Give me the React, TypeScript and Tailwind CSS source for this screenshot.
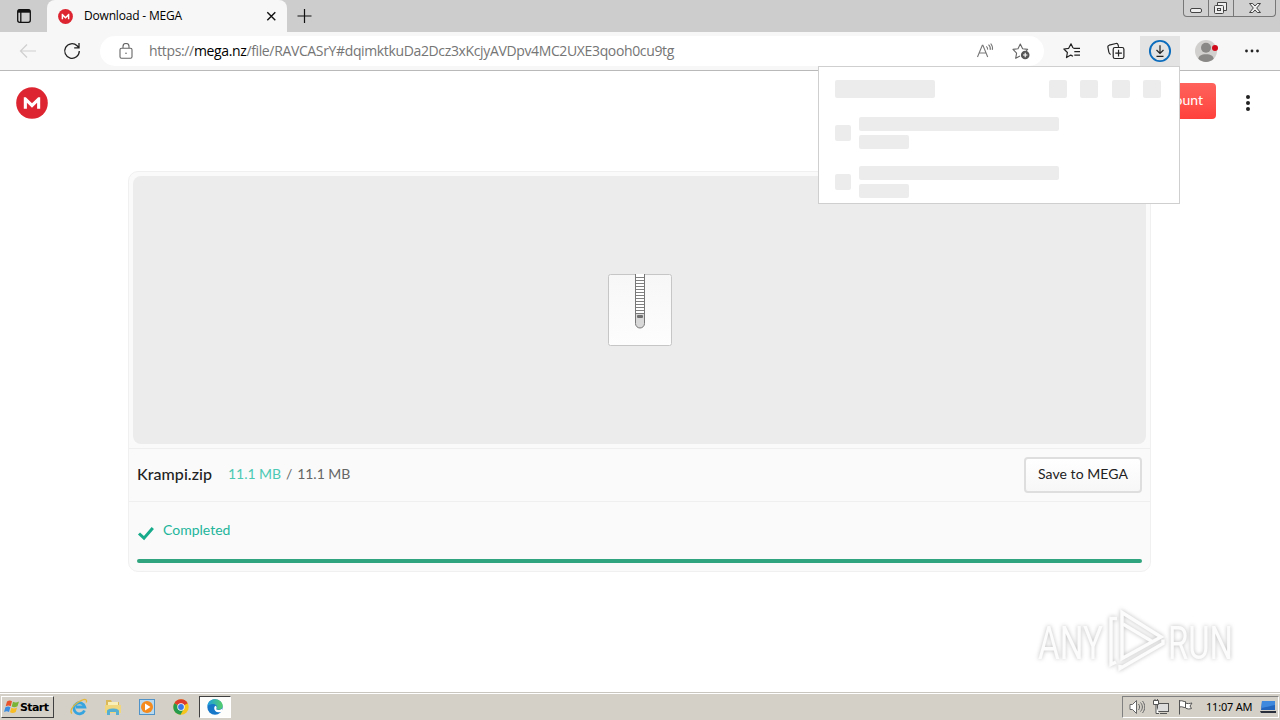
import type { ReactNode } from 'react';

const SEGOE = "font-['Open_Sans','Noto_Sans',sans-serif]";
const LATO = "font-['Lato',sans-serif]";

function MegaLogo({ size }: { size: number }) {
  return (
    <svg width={size} height={size} viewBox="0 0 32 32">
      <circle cx="16" cy="16" r="15.8" fill="#dc2530" />
      <path d="M7.8 21.8V10.2h2l6.2 6.1 6.2-6.1h2v11.6h-3.1v-6L16 20.7l-5.1-4.9v6z" fill="#fff" />
    </svg>
  );
}

function TabStrip() {
  return (
    <div className="flex h-8 bg-[#cdcdcd]">
      <div className="flex w-[47px] justify-center pt-2">
        <svg width="16" height="16" viewBox="0 0 16 16" fill="none" stroke="#111" strokeWidth="1.3">
          <rect x="1.7" y="1.7" width="12.6" height="12.6" rx="2" />
          <path d="M2 3.2h12" strokeWidth="3" />
          <path d="M4.8 4v10" />
        </svg>
      </div>
      <div className="flex h-8 w-60 items-center rounded-t-lg bg-[#f7f7f7] pl-[11px]">
        <MegaLogo size={15} />
        <span className={`${SEGOE} ml-[11px] w-[177px] text-[12px] leading-4 tracking-[-0.18px] text-black`}>
          Download - MEGA
        </span>
        <svg width="20" height="20" viewBox="0 0 20 20" stroke="#111" strokeWidth="1.4">
          <path d="M6.3 6.3l8 8M14.3 6.3l-8 8" />
        </svg>
      </div>
      <div className="flex w-[36px] items-center justify-center">
        <svg width="16" height="16" viewBox="0 0 16 16" stroke="#111" strokeWidth="1.2">
          <path d="M7.5 1v14M.5 8h14" />
        </svg>
      </div>
      <div className="ml-auto mr-[4px] flex h-[17px] w-[93px] rounded-b-[4px] border border-t-0 border-[#777] bg-[#d0d0d0]">
        <svg width="91" height="16" viewBox="0 0 91 16" fill="none" stroke="#444" strokeWidth="1">
          <path d="M24.5 0v16M49.5 0v16" stroke="#777" />
          <rect x="6.5" y="8.5" width="11" height="4" rx="1.5" fill="#eee" />
          <path d="M33.5 5.500V2.500h9v8h-3" fill="#eee" />
          <rect x="30.500" y="5.500" width="9" height="8" rx="1" fill="#eee" />
          <rect x="33.500" y="8.500" width="3" height="2" />
          <path d="M65.500 3.500h3.200l2.300 2.500 2.300-2.500h3.200l-3.800 4.500 3.800 4.500h-3.200l-2.300-2.500-2.300 2.500h-3.200l3.800-4.500z" fill="#eee" />
        </svg>
      </div>
    </div>
  );
}

function Slot({ className, children }: { className: string; children: ReactNode }) {
  return <div className={`flex h-[30px] shrink-0 items-center justify-center ${className}`}>{children}</div>;
}

function Toolbar() {
  return (
    <div className="flex h-[39px] border-b border-[#b9b9b9] bg-[#f7f7f7] pt-1">
      <Slot className="w-14">
        <svg width="18" height="16" viewBox="0 0 18 16" fill="none" stroke="#cfcfcf" strokeWidth="1.2">
          <path d="M17 8H1.500M8 1.500L1.500 8 8 14.500" />
        </svg>
      </Slot>
      <Slot className="w-8">
        <svg width="18" height="18" viewBox="0 0 18 18" fill="none" stroke="#222" strokeWidth="1.300">
          <path d="M16.300 9a7.300 7.300 0 1 1-2.200-5.200L16 5.700M16 1v4.800h-4.800" />
        </svg>
      </Slot>
      <div className="ml-3 flex h-[30px] w-[944px] shrink-0 items-center rounded-full bg-white pl-[19px]">
        <svg width="14" height="16" viewBox="0 0 14 16" fill="none" stroke="#666" strokeWidth="1.100">
          <rect x="1" y="5.200" width="12" height="10" rx="1.500" />
          <path d="M4 5V3.500a3 3 0 0 1 6 0V5" />
          <circle cx="7" cy="10.200" r=".8" fill="#666" stroke="none" />
        </svg>
        <span className={`${SEGOE} ml-4 w-[822px] whitespace-nowrap text-[14px] leading-5 tracking-[-0.36px] text-[#757575]`}>
          https://<span className="text-black">mega.nz</span>
          /file/RAVCASrY#dqimktkuDa2Dcz3xKcjyAVDpv4MC2UXE3qooh0cu9tg
        </span>
        <Slot className="w-[28px]">
          <svg width="18" height="16" viewBox="0 0 18 16" fill="none" stroke="#777" strokeWidth="1.100">
            <path d="M1.500 14L6.300 2.200h.6L11.700 14M3.200 10h6.800M10.300 3.300c1.100 1 1.500 2 1.300 3.400M12.500 1.700c1.700 1.600 2.200 3.300 1.700 5.200M14.700.5c1.700 2.200 2.300 4 1.600 6.300" />
          </svg>
        </Slot>
        <Slot className="ml-[8px] w-[28px]">
          <svg width="18" height="18" viewBox="0 0 18 18" fill="none" stroke="#666" strokeWidth="1.100">
            <path d="M8 14l-4.300 2.300.9-5.200L1 7.400l5-.7L8.300 2l2.300 4.700 5 .7-1.400 1.500" strokeLinejoin="round" />
            <circle cx="13.200" cy="13" r="4.300" fill="#555" stroke="none" />
            <path d="M13.200 10.800v4.400M11 13h4.400" stroke="#fff" />
          </svg>
        </Slot>
      </div>
      <Slot className="ml-[8px] w-10">
        <svg width="18" height="18" viewBox="0 0 18 18" fill="none" stroke="#222" strokeWidth="1.200">
          <path d="M10 14.300l-2.200-1.200-4.300 2.500.9-5.100L.9 7l4.800-.7L8 1.800l2 4.300M10.300 6.300H17M11.300 9.700H17M11.300 13.200H17" strokeLinejoin="round" />
        </svg>
      </Slot>
      <Slot className="ml-1 w-10">
        <svg width="18" height="18" viewBox="0 0 18 18" fill="none" stroke="#222" strokeWidth="1.200">
          <path d="M3.700 12.500C2.300 11.800 2 11 1.800 10L.9 5.200c-.2-1 .3-1.700 1.300-2L9 1.500c1-.2 1.800.3 2.100 1.300l.5 2" />
          <rect x="6.200" y="5.500" width="10.700" height="11" rx="1.800" />
          <path d="M11.550 7.800v6.600M8.300 11.100h6.600" />
        </svg>
      </Slot>
      <Slot className="ml-1 w-10 bg-[#e3e3e3]">
        <svg width="24" height="24" viewBox="0 0 24 24" fill="none">
          <circle cx="12" cy="12" r="10.100" stroke="#0b6cbd" strokeWidth="1.900" />
          <path d="M12 6.200v8M8.500 11l3.500 3.500 3.500-3.500M8.500 17.300h7" stroke="#222" strokeWidth="1.200" />
        </svg>
      </Slot>
      <Slot className="ml-[14px] w-6">
        <svg width="24" height="24" viewBox="0 0 24 24">
          <circle cx="12" cy="12" r="11" fill="#d2d0ce" />
          <circle cx="12" cy="8.800" r="5" fill="#8a8886" />
          <path d="M4.300 19.800c.6-3 2.700-4.500 7.700-4.500s7.100 1.500 7.700 4.500A11 11 0 0 1 4.300 19.800z" fill="#8a8886" />
          <circle cx="21" cy="9" r="3" fill="#d10a1b" />
        </svg>
      </Slot>
      <Slot className="ml-[24px] w-5">
        <svg width="16" height="4" viewBox="0 0 16 4" fill="#222">
          <circle cx="2.500" cy="2" r="1.400" />
          <circle cx="8" cy="2" r="1.400" />
          <circle cx="13.500" cy="2" r="1.400" />
        </svg>
      </Slot>
    </div>
  );
}

function SkeletonRow() {
  return (
    <div className="flex items-center gap-2">
      <div className="size-4 rounded-[2px] bg-[#ececec]" />
      <div className="flex flex-col gap-1">
        <div className="h-[14px] w-[200px] rounded-[2px] bg-[#ececec]" />
        <div className="h-[14px] w-[50px] rounded-[2px] bg-[#ececec]" />
      </div>
    </div>
  );
}

function DownloadsFlyout() {
  return (
    <div className="absolute left-[818px] top-[66px] h-[138px] w-[362px] border border-[#cfcfcf] bg-white pl-4 pt-[13px]">
      <div className="flex h-[18px]">
        <div className="w-[100px] rounded-[2px] bg-[#ececec]" />
        <div className="ml-[114px] w-[18px] rounded-[2px] bg-[#ececec]" />
        <div className="ml-[13px] w-[18px] rounded-[2px] bg-[#ececec]" />
        <div className="ml-[14px] w-[18px] rounded-[2px] bg-[#ececec]" />
        <div className="ml-[13px] w-[18px] rounded-[2px] bg-[#ececec]" />
      </div>
      <div className="mt-[19px] flex flex-col gap-[17px]">
        <SkeletonRow />
        <SkeletonRow />
      </div>
    </div>
  );
}

function ZipIcon() {
  return (
    <svg width="66" height="76" viewBox="0 0 66 76">
      <defs>
        <linearGradient id="paper" x1="0" y1="0" x2="0" y2="1">
          <stop offset="0" stopColor="#f7f7f7" />
          <stop offset="1" stopColor="#fdfdfd" />
        </linearGradient>
      </defs>
      <rect x="1.500" y="2.500" width="63" height="71" rx="2" fill="url(#paper)" stroke="#c6c6c6" />
      <rect x="28" y="2" width="10" height="41" fill="#fff" />
      <path d="M28 5.500h10M28 8.500h10M28 11.500h10M28 14.500h10M28 17.500h10M28 20.500h10M28 23.500h10M28 26.500h10M28 29.500h10M28 32.500h10M28 35.500h10M28 38.500h10" stroke="#808080" />
      <path d="M28.500 41.500h9v10a4.500 4.500 0 0 1-9 0z" fill="#d8d8d8" />
      <path d="M28.500 2v49.500a4.500 4.500 0 0 0 9 0V2M28 41.500h10" fill="none" stroke="#777" />
      <rect x="30" y="43" width="6" height="3" rx="1" fill="#707070" />
    </svg>
  );
}

function FileCard() {
  return (
    <div className={`${LATO} ml-32 mt-[60px] h-[401px] w-[1023px] rounded-[10px] border border-[#f0f0f0] bg-[#fafafa]`}>
      <div className="ml-1 mt-1 flex h-[268px] w-[1013px] items-start justify-center rounded-lg bg-[#ececec] pt-24">
        <ZipIcon />
      </div>
      <div className="mt-1 flex h-[54px] items-center border-y border-[#efefef] pl-2 pr-2">
        <span className="w-[91px] whitespace-nowrap pb-[2px] text-[16px] font-medium leading-5 tracking-[0.05px] text-[#222]">
          Krampi.zip
        </span>
        <span className="whitespace-nowrap pb-[2px] text-[14px] leading-5 tracking-[-0.05px] text-[#666]">
          <span className="text-[#4cc9b4]">11.1 MB</span>
          <span className="mx-[5px]">/</span>
          11.1 MB
        </span>
        <button className="ml-auto h-9 w-[118px] whitespace-nowrap rounded-[4px] border-2 border-[#dedede] bg-gradient-to-b from-white to-[#f7f7f7] pb-[2px] text-[14px] leading-5 tracking-[0.05px] text-[#222]">
          Save to MEGA
        </button>
      </div>
      <div className="flex h-[57px] items-center pl-2">
        <svg width="18" height="16" viewBox="0 0 18 16" className="mt-[5px]">
          <path d="M2 8.500l5 4.700L15.800 3" fill="none" stroke="#16ab8b" strokeWidth="3" />
        </svg>
        <span className="ml-2 pb-[2px] text-[14px] leading-5 text-[#22b59a]">Completed</span>
      </div>
      <div className="ml-2 h-1 w-[1005px] rounded-full bg-[#2fa47e]" />
    </div>
  );
}

function Watermark() {
  return (
    <svg
      width="250"
      height="80"
      viewBox="0 0 250 80"
      className="absolute left-[1030px] top-[600px] [filter:drop-shadow(0_0_2px_#bdbdbd)]"
    >
      <g fill="#fcfcfc" fontFamily="Roboto, sans-serif" fontSize="46">
        <text x="8" y="58.500" textLength="65" lengthAdjust="spacingAndGlyphs">ANY</text>
        <text x="138" y="58.500" textLength="65" lengthAdjust="spacingAndGlyphs">RUN</text>
      </g>
      <g fill="none" stroke="#fcfcfc" strokeWidth="3.500">
        <path d="M92 12.500v46L131 37z" />
        <path d="M87 18.500h-6v46l5-2.500M90 65v3.500l43-25v-4" />
        <path d="M93 24l30 18" />
      </g>
    </svg>
  );
}

function MegaPage() {
  return (
    <div className="h-[621px] bg-white">
      <div className="flex h-10 pl-4 pt-4">
        <div className="h-8 w-8">
          <MegaLogo size={32} />
        </div>
        <div className={`${LATO} ml-auto -mt-1 flex h-9 w-[136px] shrink-0 items-center justify-end rounded-[4px] bg-gradient-to-b from-[#ff625c] to-[#ff403b] pb-[3px] pr-[13px] text-[14px] text-white`}>
          Create account
        </div>
        <div className="ml-[28px] mr-[28px] flex h-8 w-2 flex-col items-center justify-center gap-[2px]">
          <i className="size-1 rounded-full bg-[#222]" />
          <i className="size-1 rounded-full bg-[#222]" />
          <i className="size-1 rounded-full bg-[#222]" />
        </div>
      </div>
      <FileCard />
    </div>
  );
}

function Taskbar() {
  return (
    <div className="flex h-7 border-t border-[#c9c6bf] bg-[#d4d0c8] pt-[3px] [box-shadow:inset_0_1px_0_#fff]">
      <div className="ml-px flex h-[22px] w-[53px] items-center border border-b-[#404040] border-l-white border-r-[#404040] border-t-white pl-[2px]">
        <svg width="16" height="16" viewBox="0 0 16 16" className="shrink-0">
          <path d="M3 2.500c2-1.200 3.500-1.200 5-.2L6.700 7.200c-1.500-1-3-1-5 0z" fill="#e8532b" />
          <path d="M9 2.800c2 1 3.700 1 6-.3l-1.500 4.800c-2 1.100-4 1.200-5.800.2z" fill="#79b436" />
          <path d="M1.400 8.300c2-1 3.500-1 5 0L5 13c-1.500-1-3-1-5 0z" fill="#3a8de0" />
          <path d="M7.400 8.700c1.700 1 3.700.9 5.700-.2L11.700 13c-2 1.200-4 1.100-5.700.2z" fill="#f8bd24" />
        </svg>
        <span className="whitespace-nowrap pt-px font-['DejaVu_Sans',sans-serif] text-[11px] font-bold leading-4 tracking-[-0.6px] text-black">
          Start
        </span>
      </div>
      <Slot className="-mt-1 ml-[9px] w-8">
        <svg width="18" height="18" viewBox="0 0 18 18" fill="none">
          <path d="M14.500 12.500a5.500 5.500 0 1 1 .3-3.500H6" stroke="#36a5df" strokeWidth="2.800" />
          <path d="M2 15.500c-2.500-2 0-7 5-10.500s9-4.500 9.500-2.500c.2.700 0 1.300-.3 2" stroke="#e5b83b" strokeWidth="1.300" />
        </svg>
      </Slot>
      <Slot className="-mt-1 ml-[2px] w-8">
        <svg width="18" height="18" viewBox="0 0 18 18">
          <path d="M2 2h5l1 2h7v10H2z" fill="#dcb958" />
          <path d="M4 4h10v5H4z" fill="#f8efb8" />
          <path d="M1 7h16v8H1z" fill="#f0d67d" />
          <path d="M3 17v-4c0-3.500 12-3.500 12 0v4h-3v-3H6v3z" fill="#55afd2" />
        </svg>
      </Slot>
      <Slot className="-mt-1 ml-[2px] w-8">
        <svg width="18" height="18" viewBox="0 0 18 18">
          <rect x="1.500" y="1.500" width="15" height="15" fill="#b9d9ef" stroke="#4f93c9" />
          <circle cx="9" cy="9" r="6" fill="#f58a1d" />
          <path d="M7 5.500l5.500 3.500L7 12.500z" fill="#fff" />
        </svg>
      </Slot>
      <Slot className="-mt-1 ml-[2px] w-8">
        <svg width="16" height="16" viewBox="0 0 16 16">
          <circle cx="8" cy="8" r="7.700" fill="#f6c51d" />
          <path d="M8 8L1.300 4.200A7.700 7.700 0 0 1 14.700 4.200z" fill="#dc3b2d" />
          <path d="M8 8L1.300 4.200A7.700 7.700 0 0 0 7.500 15.700l3.300-6z" fill="#269a4d" />
          <circle cx="8" cy="8" r="3.700" fill="#fff" />
          <circle cx="8" cy="8" r="2.900" fill="#3b78e7" />
        </svg>
      </Slot>
      <div className="ml-[2px] flex h-[22px] w-8 items-center justify-center border border-b-white border-l-[#404040] border-r-white border-t-[#404040] bg-[#fdfdfc]">
        <svg width="16" height="16" viewBox="0 0 16 16">
          <defs>
            <linearGradient id="wave" x1="0" y1="0" x2="1" y2="0">
              <stop offset="0" stopColor="#1d9fe2" />
              <stop offset="1" stopColor="#54cf67" />
            </linearGradient>
          </defs>
          <circle cx="8" cy="8" r="7.700" fill="#1676c8" />
          <path d="M.5 7C1 2.500 4 .3 8 .3c4.500 0 7.700 3 7.700 6.500 0 2.500-2 4-4.500 4-1.500 0-2-.6-1.700-1.200C11 7.500 9 5 6 5 3.500 5 1.500 6 .5 7z" fill="url(#wave)" />
          <path d="M9.500 9.200c-.6.900 0 1.700 1.700 1.800 1.300 0 2.700-.3 3.800-1.200v2.600c-1 .6-2.200.9-3.600.9-2.500 0-4.200-2-4.200-4 0-1.200.5-2 1.200-2.500 1 .5 1.500 1.500 1.100 2.400z" fill="#fff" />
        </svg>
      </div>
      <div className="ml-auto mr-px flex h-[22px] w-[157px] items-center border border-b-white border-l-[#808080] border-r-white border-t-[#808080] pl-[6px]">
        <svg width="16" height="16" viewBox="0 0 16 16" fill="#fff" stroke="#666">
          <path d="M1 5.500h2.500l4-4v13l-4-4H1z" />
          <path d="M9.500 5c1.500 2 1.500 4 0 6M11.500 3.500c2.500 3 2.500 6 0 9M13.500 2c3 4 3 8 0 12" fill="none" />
        </svg>
        <svg width="16" height="16" viewBox="0 0 16 16" fill="#fff" stroke="#555" className="ml-2">
          <rect x="4.500" y="4.500" width="11" height="8" fill="#ddd" />
          <path d="M7 14.500h7M.5 1.500h5v4h-5zM2 0v2M4.500 0v2M3 6v8.500h3" />
        </svg>
        <svg width="16" height="16" viewBox="0 0 16 16" fill="#fff" stroke="#555" className="ml-2">
          <path d="M2.500 1v14.500M2.500 2c3-1 4 1 6 .5v6c-2 .5-3-1.500-6-.5zM8.500 4c2 1 4 .5 6.500 0l-2 3 1.500 2.500c-2 .7-4 .7-6-.5z" />
        </svg>
        <span className="ml-[13px] whitespace-nowrap font-['Noto_Sans',sans-serif] text-[11px] leading-4 tracking-[-0.2px] text-black">
          11:07 AM
        </span>
        <svg width="16" height="14" viewBox="0 0 16 14" className="ml-auto mr-[2px]">
          <path d="M2 1h13v9H1z" fill="#2465bd" />
          <path d="M2 1h13v4L1.500 8z" fill="#3f8ade" />
          <path d="M0 11h16v2H1z" fill="#29303b" />
        </svg>
      </div>
    </div>
  );
}

export default function App() {
  return (
    <div className="relative flex h-[720px] w-[1280px] flex-col overflow-hidden bg-white">
      <TabStrip />
      <Toolbar />
      <MegaPage />
      <Taskbar />
      <DownloadsFlyout />
      <Watermark />
    </div>
  );
}
